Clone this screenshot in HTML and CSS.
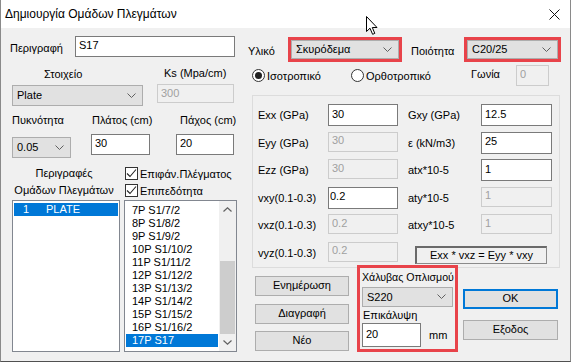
FILE: index.html
```html
<!DOCTYPE html>
<html lang="el">
<head>
  <meta charset="UTF-8" />
  <title>Δημιουργία Ομάδων Πλεγμάτων</title>
  <link rel="stylesheet" href="styles.css">
</head>
<body>
  <div class="window">
    <div class="titlebar">
      <span class="title">Δημιουργία Ομάδων Πλεγμάτων</span>
      <svg class="close" width="11" height="11" viewBox="0 0 11 11"><path d="M0.5 0.5 L10.5 10.5 M10.5 0.5 L0.5 10.5" stroke="#111" stroke-width="1" fill="none"/></svg>
    </div>

    <div class="content">
      <!-- left side: description, element, lists -->
      <div class="col-left">
        <div class="desc-row">
          <span class="desc-label">Περιγραφή</span>
          <input class="txt desc-input" type="text" value="S17">
        </div>

        <div class="grid-two">
          <span class="cap cap-stoixeio">Στοιχείο</span>
          <span class="cap cap-ks">Ks (Mpa/cm)</span>
          <div class="combo combo-plate">
            <span>Plate</span>
            <svg width="9" height="5" viewBox="0 0 9 5"><path d="M0.5 0.5 L4.5 4.5 L8.5 0.5" stroke="#606060" fill="none"/></svg>
          </div>
          <input class="txt off ks-input" type="text" value="300" disabled>
        </div>

        <div class="grid-three">
          <span class="cap cap-dens">Πυκνότητα</span>
          <span class="cap cap-width">Πλάτος (cm)</span>
          <span class="cap cap-thick">Πάχος (cm)</span>
          <div class="combo combo-dens">
            <span>0.05</span>
            <svg width="9" height="5" viewBox="0 0 9 5"><path d="M0.5 0.5 L4.5 4.5 L8.5 0.5" stroke="#606060" fill="none"/></svg>
          </div>
          <input class="txt in-width" type="text" value="30">
          <input class="txt in-thick" type="text" value="20">
        </div>

        <div class="lists">
          <div class="groups-col">
            <div class="cap-center">Περιγραφές</div>
            <div class="cap-center">Ομάδων Πλεγμάτων</div>
            <div class="listbox groups-list">
              <div class="row sel"><span class="num">1</span>PLATE</div>
            </div>
          </div>

          <div class="mesh-col">
            <label class="check">
              <span class="box"><svg width="11" height="11" viewBox="0 0 11 11"><path d="M1 5.5 L4 8.5 L10 1.5" stroke="#222" stroke-width="1.1" fill="none"/></svg></span>
              Επιφάν.Πλέγματος
            </label>
            <label class="check">
              <span class="box"><svg width="11" height="11" viewBox="0 0 11 11"><path d="M1 5.5 L4 8.5 L10 1.5" stroke="#222" stroke-width="1.1" fill="none"/></svg></span>
              Επιπεδότητα
            </label>
            <div class="listbox mesh-list">
              <div class="items">
                <div class="row">7P S1/7/2</div>
                <div class="row">8P S1/8/2</div>
                <div class="row">9P S1/9/2</div>
                <div class="row">10P S1/10/2</div>
                <div class="row">11P S1/11/2</div>
                <div class="row">12P S1/12/2</div>
                <div class="row">13P S1/13/2</div>
                <div class="row">14P S1/14/2</div>
                <div class="row">15P S1/15/2</div>
                <div class="row">16P S1/16/2</div>
                <div class="row sel">17P S17</div>
              </div>
              <div class="scrollbar">
                <div class="sb-btn"><svg width="9" height="5" viewBox="0 0 9 5"><path d="M0.5 4.5 L4.5 0.8 L8.5 4.5" stroke="#606060" stroke-width="1.2" fill="none"/></svg></div>
                <div class="sb-track"><div class="sb-thumb"></div></div>
                <div class="sb-btn"><svg width="9" height="5" viewBox="0 0 9 5"><path d="M0.5 0.5 L4.5 4.2 L8.5 0.5" stroke="#606060" stroke-width="1.2" fill="none"/></svg></div>
              </div>
            </div>
          </div>
        </div>
      </div>

      <!-- right side: material and properties -->
      <div class="col-right">
        <div class="mat-row">
          <span class="lbl w-yliko">Υλικό</span>
          <div class="mark mark-mat">
            <div class="combo combo-fill">
              <span>Σκυρόδεμα</span>
              <svg width="9" height="5" viewBox="0 0 9 5"><path d="M0.5 0.5 L4.5 4.5 L8.5 0.5" stroke="#606060" fill="none"/></svg>
            </div>
          </div>
          <span class="lbl w-poiotita">Ποιότητα</span>
          <div class="mark mark-grade">
            <div class="combo combo-fill">
              <span>C20/25</span>
              <svg width="9" height="5" viewBox="0 0 9 5"><path d="M0.5 0.5 L4.5 4.5 L8.5 0.5" stroke="#606060" fill="none"/></svg>
            </div>
          </div>
        </div>

        <div class="radio-row">
          <label class="radio on w-iso"><span class="ring"></span>Ισοτροπικό</label>
          <label class="radio w-ortho"><span class="ring"></span>Ορθοτροπικό</label>
          <span class="lbl w-gonia">Γωνία</span>
          <input class="txt off angle" type="text" value="0" disabled>
        </div>

        <div class="props">
          <span class="lbl">Exx (GPa)</span>
          <input class="txt" type="text" value="30">
          <span class="lbl pad">Gxy (GPa)</span>
          <input class="txt" type="text" value="12.5">

          <span class="lbl">Eyy (GPa)</span>
          <input class="txt off" type="text" value="30" disabled>
          <span class="lbl pad">ε (kN/m3)</span>
          <input class="txt" type="text" value="25">

          <span class="lbl">Ezz (GPa)</span>
          <input class="txt off" type="text" value="30" disabled>
          <span class="lbl pad">atx*10-5</span>
          <input class="txt" type="text" value="1">

          <span class="lbl">vxy(0.1-0.3)</span>
          <input class="txt tight" type="text" value="0.2">
          <span class="lbl pad">aty*10-5</span>
          <input class="txt off" type="text" value="1" disabled>

          <span class="lbl">vxz(0.1-0.3)</span>
          <input class="txt off" type="text" value="0.2" disabled>
          <span class="lbl pad">atxy*10-5</span>
          <input class="txt off" type="text" value="1" disabled>

          <span class="lbl">vyz(0.1-0.3)</span>
          <input class="txt off" type="text" value="0.2" disabled>
          <div class="formula">Exx * vxz = Eyy * vxy</div>
        </div>

        <div class="bottom">
          <div class="btn-col">
            <button class="btn">Ενημέρωση</button>
            <button class="btn">Διαγραφή</button>
            <button class="btn">Νέο</button>
          </div>

          <div class="mark steel">
            <div class="steel-cap">Χάλυβας Οπλισμού</div>
            <div class="combo combo-steel">
              <span>S220</span>
              <svg width="9" height="5" viewBox="0 0 9 5"><path d="M0.5 0.5 L4.5 4.5 L8.5 0.5" stroke="#606060" fill="none"/></svg>
            </div>
            <div class="steel-cap2">Επικάλυψη</div>
            <div class="cover-row">
              <input class="txt cover" type="text" value="20">
              <span>mm</span>
            </div>
          </div>

          <div class="btn-col btn-col-right">
            <button class="btn default">OK</button>
            <button class="btn">Εξοδος</button>
          </div>
        </div>
      </div>
    </div>

    <svg class="cursor" width="13" height="20" viewBox="0 0 13 20"><path d="M0.5 0.5 L0.5 15.5 L4 12.2 L6.6 18.3 L8.8 17.4 L6.3 11.5 L11 11.5 Z" fill="#fff" stroke="#000" stroke-width="1"/></svg>
  </div>
</body>
</html>
```

FILE: styles.css
```css
* {
  box-sizing: border-box;
}

body {
  margin: 0;
  background: #ffffff;
  font-family: "Liberation Sans", Arial, sans-serif;
  font-size: 11px;
  color: #000;
}

.window {
  position: relative;
  width: 571px;
  height: 362px;
  overflow: hidden;
  background: #f0f0f0;
  border: 1px solid #8a8a8a;
  border-top: none;
  border-bottom-color: #505050;
}

.titlebar {
  display: flex;
  align-items: center;
  height: 28px;
  background: #fff;
  padding-left: 4px;
}

.title {
  font-size: 12px;
}

.close {
  margin-left: auto;
  margin-right: 10px;
}

.cursor {
  position: absolute;
  left: 365px;
  top: 16px;
}

.content {
  display: flex;
  padding-left: 7px;
}

.col-left {
  width: 229px;
}

.col-right {
  width: 314px;
  margin-left: 11px;
}

/* inputs, combos */
.txt {
  height: 21px;
  border: 1px solid #7a7a7a;
  background: #fff;
  font: inherit;
  color: #000;
  padding: 0 3px 3px;
  margin: 0;
  outline: none;
}

.txt.off {
  border-color: #cccccc;
  background: #f0f0f0;
  color: #a0a0a0;
}

.combo {
  display: flex;
  align-items: center;
  justify-content: space-between;
  height: 21px;
  background: #e1e1e1;
  border: 1px solid #adadad;
  padding: 0 6px 1px 4px;
  white-space: nowrap;
}

.combo svg {
  flex: none;
}

.mark {
  border: 3px solid #e8434a;
}

.combo-fill {
  height: 100%;
}

/* left column */
.desc-row {
  display: flex;
  align-items: center;
  height: 21px;
  margin-top: 8px;
}

.desc-label {
  margin-left: 2px;
  padding-top: 3px;
}

.desc-input {
  width: 160px;
  margin-left: auto;
  margin-right: 2px;
}

.grid-two {
  display: grid;
  grid-template-columns: 149px 78px;
  grid-template-rows: 18px 22px;
  row-gap: 2px;
  margin-top: 7px;
  align-items: center;
}

.cap-stoixeio {
  padding-left: 36px;
  padding-top: 2px;
}

.cap-ks {
  padding-left: 7px;
}

.combo-plate {
  width: 131px;
  margin: 1px 0 0 4px;
}

.ks-input {
  width: 77px;
  height: 19px;
  align-self: start;
  padding-bottom: 1px;
}

.grid-three {
  display: grid;
  grid-template-columns: 83px 85px 61px;
  grid-template-rows: 16px 24px;
  row-gap: 6px;
  margin-top: 6px;
  align-items: start;
}

.cap {
  line-height: 16px;
  white-space: nowrap;
}

.cap-dens {
  padding-left: 4px;
}

.cap-width {
  padding-left: 1px;
}

.cap-thick {
  padding-left: 4px;
}

.combo-dens {
  width: 59px;
  margin: 3px 0 0 4px;
}

.in-width {
  width: 59px;
}

.in-thick {
  width: 58px;
}

.lists {
  display: flex;
  margin-top: 7px;
}

.groups-col {
  width: 112px;
}

.cap-center {
  text-align: center;
  line-height: 17px;
  white-space: nowrap;
}

.listbox {
  margin-top: 1px;
  height: 152px;
  background: #fff;
  border: 1px solid #828790;
}

.groups-list {
  width: 108px;
  margin-left: 4px;
  padding: 2px 1px;
}

.row {
  height: 13px;
  line-height: 13px;
  white-space: nowrap;
}

.row.sel {
  background: #0078d7;
  color: #fff;
}

.num {
  display: inline-block;
  width: 32px;
  padding-left: 9px;
}

.mesh-col {
  width: 113px;
  margin-left: 4px;
}

.check {
  display: flex;
  align-items: center;
  height: 17px;
  gap: 2px;
  white-space: nowrap;
}

.box {
  display: flex;
  align-items: center;
  justify-content: center;
  width: 13px;
  height: 13px;
  margin-left: 1px;
  border: 1px solid #333;
  background: #fff;
}

.mesh-list {
  display: flex;
}

.items {
  flex: 1;
  padding: 3px 1px 0;
}

.mesh-list .row {
  padding-left: 6px;
}

.scrollbar {
  width: 17px;
  display: flex;
  flex-direction: column;
  background: #f0f0f0;
}

.sb-btn {
  height: 17px;
  display: flex;
  align-items: center;
  justify-content: center;
}

.sb-track {
  flex: 1;
  padding: 43px 1px 0;
}

.sb-thumb {
  height: 73px;
  background: #cdcdcd;
}

/* right column */
.lbl {
  white-space: nowrap;
}

.mat-row {
  display: flex;
  align-items: center;
  height: 25px;
  margin-top: 9px;
}

.w-yliko {
  width: 40px;
  padding-top: 3px;
}

.mark-mat {
  width: 114px;
  height: 25px;
}

.w-poiotita {
  width: 53px;
  margin-left: 9px;
  padding-top: 3px;
}

.mark-grade {
  width: 97px;
  height: 25px;
}

.radio-row {
  display: flex;
  align-items: center;
  height: 21px;
  margin-top: 3px;
}

.radio {
  display: flex;
  align-items: center;
  gap: 2px;
  white-space: nowrap;
}

.ring {
  position: relative;
  width: 13px;
  height: 13px;
  border: 1px solid #333;
  border-radius: 50%;
  background: #fff;
}

.radio.on .ring::after {
  content: "";
  position: absolute;
  left: 2px;
  top: 2px;
  width: 7px;
  height: 7px;
  border-radius: 50%;
  background: #222;
}

.w-iso {
  width: 99px;
  margin-left: 4px;
}

.w-ortho {
  width: 120px;
}

.w-gonia {
  width: 45px;
  padding-bottom: 3px;
}

.angle {
  width: 33px;
}

.props {
  display: grid;
  grid-template-columns: 70px 70px 83px 71px;
  grid-auto-rows: 22px;
  row-gap: 5.6px;
  align-items: center;
  width: 308px;
  height: 173px;
  margin: 9px 0 0 4px;
  padding: 8px 0 0 5px;
  border: 1px solid #dcdcdc;
}

.props .txt {
  height: 22px;
}

.props .txt.off {
  height: 20px;
  align-self: start;
}

.props .txt.tight {
  padding-left: 1px;
}

.lbl.pad {
  padding-left: 10px;
}

.formula {
  grid-column: 3 / 5;
  width: 132px;
  height: 18px;
  margin-left: 17px;
  align-self: end;
  line-height: 14px;
  text-align: center;
  white-space: nowrap;
  border: 1px solid #8a8a8a;
  border-top: 2px solid #6a6a6a;
  border-left: 2px solid #6a6a6a;
}

.bottom {
  display: flex;
  margin-top: -3px;
}

.btn-col {
  display: flex;
  flex-direction: column;
  gap: 7.5px;
  width: 94px;
  margin-left: 7px;
  padding-top: 11px;
}

.btn {
  height: 20px;
  padding: 0 0 2px;
  font: inherit;
  color: #000;
  background: #e1e1e1;
  border: 1px solid #adadad;
}

.btn.default {
  border: 2px solid #0078d7;
}

.steel {
  width: 101px;
  height: 87px;
  margin-left: 8px;
  padding: 0 1px;
}

.steel-cap {
  line-height: 18px;
  padding-left: 1px;
  white-space: nowrap;
  font-size: 10.6px;
}

.combo-steel {
  height: 20px;
  margin-top: 1px;
  width: 91px;
  margin-left: 1px;
}

.steel-cap2 {
  line-height: 16px;
  padding-left: 2px;
  white-space: nowrap;
}

.cover-row {
  display: flex;
  align-items: center;
  gap: 8px;
}

.cover {
  width: 59px;
  height: 24px;
  margin-left: 1px;
}

.btn-col-right {
  width: 95px;
  margin-left: 5px;
  padding-top: 24px;
  gap: 11px;
}
```
